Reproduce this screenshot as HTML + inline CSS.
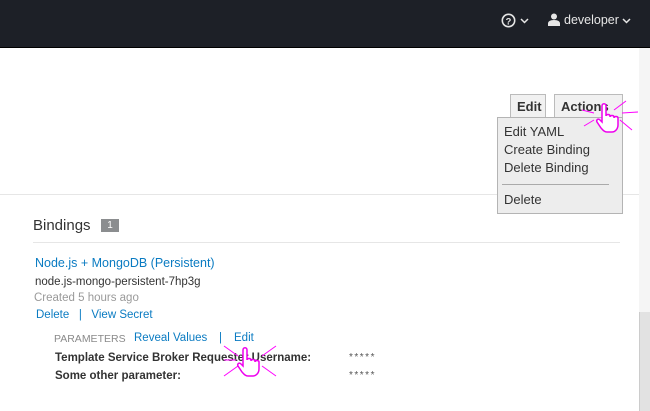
<!DOCTYPE html>
<html><head><meta charset="utf-8"><style>
*{box-sizing:border-box;margin:0;padding:0}
body{width:650px;height:411px;overflow:hidden;background:#fff;font-family:"Liberation Sans",sans-serif;position:relative;color:#363636}
.hdr{position:absolute;left:0;top:0;width:650px;height:48px;background:#1d2027;border-bottom:1px solid #000}
.hdr .t{position:absolute;top:13px;color:#e6e6e6;font-size:12.5px}
.abs{position:absolute}
.btn{position:absolute;top:94px;height:24px;border:1px solid #bbb;background:#f1f1f1;font-size:13px;font-weight:bold;color:#333;padding:4px 6px}
.menu{position:absolute;left:497px;top:117px;width:126px;height:97px;border:1px solid #b4b4b4;background:#ededed;font-size:13px;color:#333}
.menu div{position:absolute;left:6px}
a,.lnk{color:#0a7bc2;text-decoration:none}
.sb{position:absolute;left:639px;top:48px;width:11px;height:363px;background:#f5f5f5}
.th{position:absolute;left:639px;top:312px;width:11px;height:99px;background:#e2e2e2;border-left:1px solid #ccc}
</style></head><body>
<div class="hdr">
<svg class="abs" style="left:501px;top:13px" width="15" height="15" viewBox="0 0 16 16"><circle cx="8" cy="8" r="6.6" fill="none" stroke="#e6e6e6" stroke-width="1.7"/><text x="8" y="12" font-size="10" font-weight="bold" text-anchor="middle" fill="#e6e6e6" font-family="Liberation Sans">?</text></svg>
<svg class="abs" style="left:520px;top:18px" width="9" height="6" viewBox="0 0 9 6"><path d="M1 1l3.5 3.5L8 1" fill="none" stroke="#e6e6e6" stroke-width="1.5"/></svg>
<svg class="abs" style="left:548px;top:13px" width="12" height="13" viewBox="0 0 12 13"><circle cx="6" cy="3.5" r="3" fill="#e6e6e6"/><path d="M0 13v-2.5c0-2 2-3.5 6-3.5s6 1.5 6 3.5V13z" fill="#e6e6e6"/></svg>
<span class="t" style="left:564px">developer</span>
<svg class="abs" style="left:622px;top:18px" width="9" height="6" viewBox="0 0 9 6"><path d="M1 1l3.5 3.5L8 1" fill="none" stroke="#e6e6e6" stroke-width="1.5"/></svg>
</div>
<div class="sb"></div><div class="th"></div>
<div class="abs" style="left:0;top:194px;width:639px;height:1px;background:#e6e6e6"></div>
<div class="btn" style="left:510px;width:36px">Edit</div>
<div class="btn" style="left:554px;width:69px">Actions <span style="font-size:10px">⌄</span></div>
<div class="menu">
<div style="top:6px">Edit YAML</div>
<div style="top:24px">Create Binding</div>
<div style="top:42px">Delete Binding</div>
<div style="top:66px;left:4px;width:107px;height:1px;background:#aaa"></div>
<div style="top:74px">Delete</div>
</div>
<div class="abs" style="left:33px;top:217px;font-size:15px;color:#333">Bindings</div>
<div class="abs" style="left:101px;top:219px;width:18px;height:13px;background:#8b8d8f;color:#fff;font-size:10px;text-align:center;line-height:13px">1</div>
<div class="abs" style="left:33px;top:242px;width:587px;height:1px;background:#e6e6e6"></div>
<div class="abs lnk" style="left:35px;top:256px;font-size:12.5px">Node.js + MongoDB (Persistent)</div>
<div class="abs" style="left:35px;top:276px;font-size:11.5px;color:#333">node.js-mongo-persistent-7hp3g</div>
<div class="abs" style="left:34px;top:292px;font-size:11.5px;color:#9a9a9a">Created 5 hours ago</div>
<div class="abs lnk" style="left:36px;top:309px;font-size:11.5px">Delete &nbsp; | &nbsp; View Secret</div>
<div class="abs" style="left:54px;top:333px;font-size:10.5px;color:#8a8a8a">PARAMETERS</div>
<div class="abs lnk" style="left:134px;top:332px;font-size:11.5px">Reveal Values</div>
<div class="abs lnk" style="left:219px;top:332px;font-size:11.5px">|</div>
<div class="abs lnk" style="left:234px;top:332px;font-size:11.5px">Edit</div>
<div class="abs" style="left:55px;top:352px;font-size:11.5px;font-weight:bold;color:#333">Template Service Broker Requester Username:</div>
<div class="abs" style="left:55px;top:370px;font-size:11.5px;font-weight:bold;color:#333">Some other parameter:</div>
<div class="abs" style="left:349px;top:352px;font-size:10px;color:#555;letter-spacing:1.5px">*****</div>
<div class="abs" style="left:349px;top:370px;font-size:10px;color:#555;letter-spacing:1.5px">*****</div>
<svg class="abs" style="left:580px;top:96px" width="60" height="38" viewBox="0 0 60 38"><g stroke="#f0f" stroke-width="1" fill="none"><path d="M2 14L14 17M4 30L14 24M46 5L34 14M58 16L42 17M52 34L40 24"/></g><path d="M22 10c0-3 4-3 4 0v10c0-2 4-2 4 0v1c0-2 4-2 4 0v1c0-2 4-2 4 0v7c0 4-3 7-6 7h-5c-3 0-4-2-6-4l-4-6c-1-2 1-4 3-2l2 2z" fill="#fff" stroke="#e0e" stroke-width="1.5"/></svg>
<svg class="abs" style="left:222px;top:342px" width="56" height="36" viewBox="0 0 56 36"><g stroke="#f0f" stroke-width="1" fill="none"><path d="M2 4L16 14M2 18L14 18M2 34L16 24M54 4L40 14M54 34L40 24"/></g><path d="M21 8c0-3 4-3 4 0v10c0-2 4-2 4 0v1c0-2 4-2 4 0v1c0-2 4-2 4 0v7c0 4-3 7-6 7h-5c-3 0-4-2-6-4l-4-6c-1-2 1-4 3-2l2 2z" fill="#fff" stroke="#e0e" stroke-width="1.5"/></svg>
</body></html>
